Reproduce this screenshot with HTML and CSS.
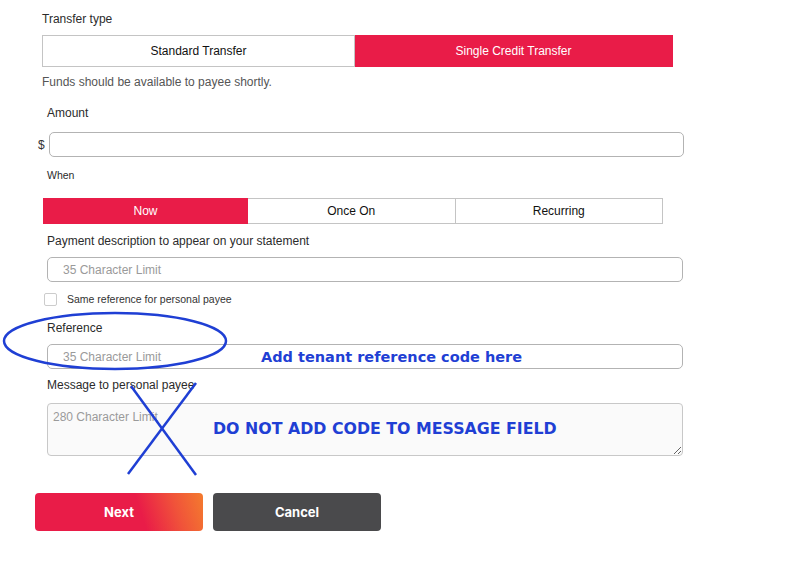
FILE: index.html
```html
<!DOCTYPE html>
<html lang="en">
<head>
    <meta charset="UTF-8">
    <title>Transfer</title>
    <link rel="stylesheet" href="styles.css">
</head>
<body>
    <div class="page">
        <form class="transfer-form">
            <div class="label label-top">Transfer type</div>
            <div class="segments segments-type">
                <button type="button" class="segment">Standard Transfer</button>
                <button type="button" class="segment active">Single Credit Transfer</button>
            </div>
            <div class="hint">Funds should be available to payee shortly.</div>

            <div class="label label-amount">Amount</div>
            <div class="amount-row">
                <span class="currency">$</span>
                <input type="text" class="field field-amount">
            </div>

            <div class="label label-small label-when">When</div>
            <div class="segments segments-when">
                <button type="button" class="segment active">Now</button>
                <button type="button" class="segment">Once On</button>
                <button type="button" class="segment">Recurring</button>
            </div>

            <div class="label label-desc">Payment description to appear on your statement</div>
            <input type="text" class="field field-text" placeholder="35 Character Limit">

            <label class="check-row">
                <span class="checkbox"></span>
                <span>Same reference for personal payee</span>
            </label>

            <div class="label label-ref">Reference</div>
            <input type="text" class="field field-text" placeholder="35 Character Limit">

            <div class="label label-msg">Message to personal payee</div>
            <textarea class="field field-area" placeholder="280 Character Limit"></textarea>

            <div class="actions">
                <button type="button" class="btn btn-next">Next</button>
                <button type="button" class="btn btn-cancel">Cancel</button>
            </div>
        </form>

        <!-- notas encima del formulario -->
        <svg class="marks" width="800" height="576" viewBox="0 0 800 576">
            <ellipse cx="115" cy="341" rx="111" ry="28" fill="none" stroke="#1f3fd4" stroke-width="2.5"/>
            <line x1="131" y1="386" x2="196" y2="475" stroke="#1f3fd4" stroke-width="2.5"/>
            <line x1="196" y1="383" x2="128" y2="474" stroke="#1f3fd4" stroke-width="2.5"/>
        </svg>
        <div class="note note-ref">Add tenant reference code here</div>
        <div class="note note-msg">DO NOT ADD CODE TO MESSAGE FIELD</div>
    </div>
</body>
</html>
```

FILE: styles.css
```css
body {
    margin: 0;
    font-family: "Liberation Sans", Arial, sans-serif;
    background: #fff;
    color: #333;
}

.page {
    position: relative;
    width: 800px;
    height: 576px;
    overflow: hidden;
}

.transfer-form {
    display: flex;
    flex-direction: column;
    align-items: flex-start;
    padding: 11px 0 0 42px;
}

.label {
    font-size: 12px;
    line-height: 16px;
    color: #2b2b2b;
    margin-left: 5px;
}

.label-top {
    margin-left: 0;
}

.label-small {
    font-size: 10.5px;
    line-height: 14px;
}

.label-amount { margin-top: 15px; }
.label-when { margin-top: 11px; }
.label-desc { margin-top: 9px; }
.label-ref { margin-top: 14px; }
.label-msg { margin-top: 8px; }

.hint {
    font-size: 12px;
    line-height: 16px;
    color: #555;
    margin-top: 7px;
}

.segments {
    display: flex;
    box-sizing: border-box;
}

.segment {
    flex: 1;
    margin: 0;
    padding: 0;
    font-family: inherit;
    font-size: 12px;
    color: #111;
    background: #fff;
    border: 1px solid #c4c4c4;
    border-left-width: 0;
}

.segment:first-child {
    border-left-width: 1px;
}

.segment.active {
    background: #e91c48;
    border-color: #e91c48;
    color: #fff;
}

.segments-type {
    width: 631px;
    height: 32px;
    margin-top: 8px;
}

.segments-type .segment:first-child {
    flex: 0 0 313px;
}

.segments-when {
    width: 620px;
    height: 26px;
    margin-top: 16px;
    margin-left: 1px;
}

.segments-when .segment:first-child {
    flex: 0 0 205px;
}

.amount-row {
    display: flex;
    align-items: center;
    margin-top: 11px;
    margin-left: -4px;
}

.currency {
    font-size: 12px;
    color: #333;
    width: 10px;
}

.field {
    box-sizing: border-box;
    font-family: inherit;
    font-size: 12px;
    color: #333;
    border: 1px solid #b3b3b3;
    border-radius: 5px;
    background: #fff;
    outline: none;
}

.field::placeholder {
    color: #9a9a9a;
}

.field-amount {
    width: 635px;
    height: 25px;
    margin-left: 1px;
}

.field-text {
    width: 636px;
    height: 25px;
    margin-top: 8px;
    margin-left: 5px;
    padding: 0 15px;
}

.field-area {
    width: 636px;
    height: 53px;
    margin-top: 10px;
    margin-left: 5px;
    padding: 6px 5px;
    background: #fafafa;
    border-color: #c8c8c8;
    border-radius: 4px;
    resize: vertical;
}

.check-row {
    display: flex;
    align-items: center;
    gap: 10px;
    font-size: 10.5px;
    line-height: 14px;
    color: #333;
    margin-top: 10px;
    margin-left: 2px;
}

.checkbox {
    width: 11px;
    height: 11px;
    border: 1px solid #ccc;
    border-radius: 2px;
    background: #fff;
}

.actions {
    display: flex;
    gap: 10px;
    margin-top: 37px;
    margin-left: -7px;
}

.btn {
    width: 168px;
    height: 38px;
    border: none;
    border-radius: 4px;
    font-family: Inter, "Liberation Sans", sans-serif;
    font-size: 13px;
    font-weight: 700;
    color: #fff;
    cursor: pointer;
}

.btn-next {
    background: linear-gradient(72deg, #e91c48 0%, #e91c48 62%, #f0523a 82%, #f47b2e 100%);
}

.btn-cancel {
    background: #4a4a4c;
}

.marks {
    position: absolute;
    left: 0;
    top: 0;
    pointer-events: none;
}

.note {
    position: absolute;
    font-family: "DejaVu Sans", Verdana, sans-serif;
    font-weight: 700;
    line-height: 18px;
    color: #1f3fd4;
}

.note-ref {
    left: 261px;
    top: 348px;
    font-size: 14.5px;
}

.note-msg {
    left: 213px;
    top: 420px;
    font-size: 15.8px;
}
```
